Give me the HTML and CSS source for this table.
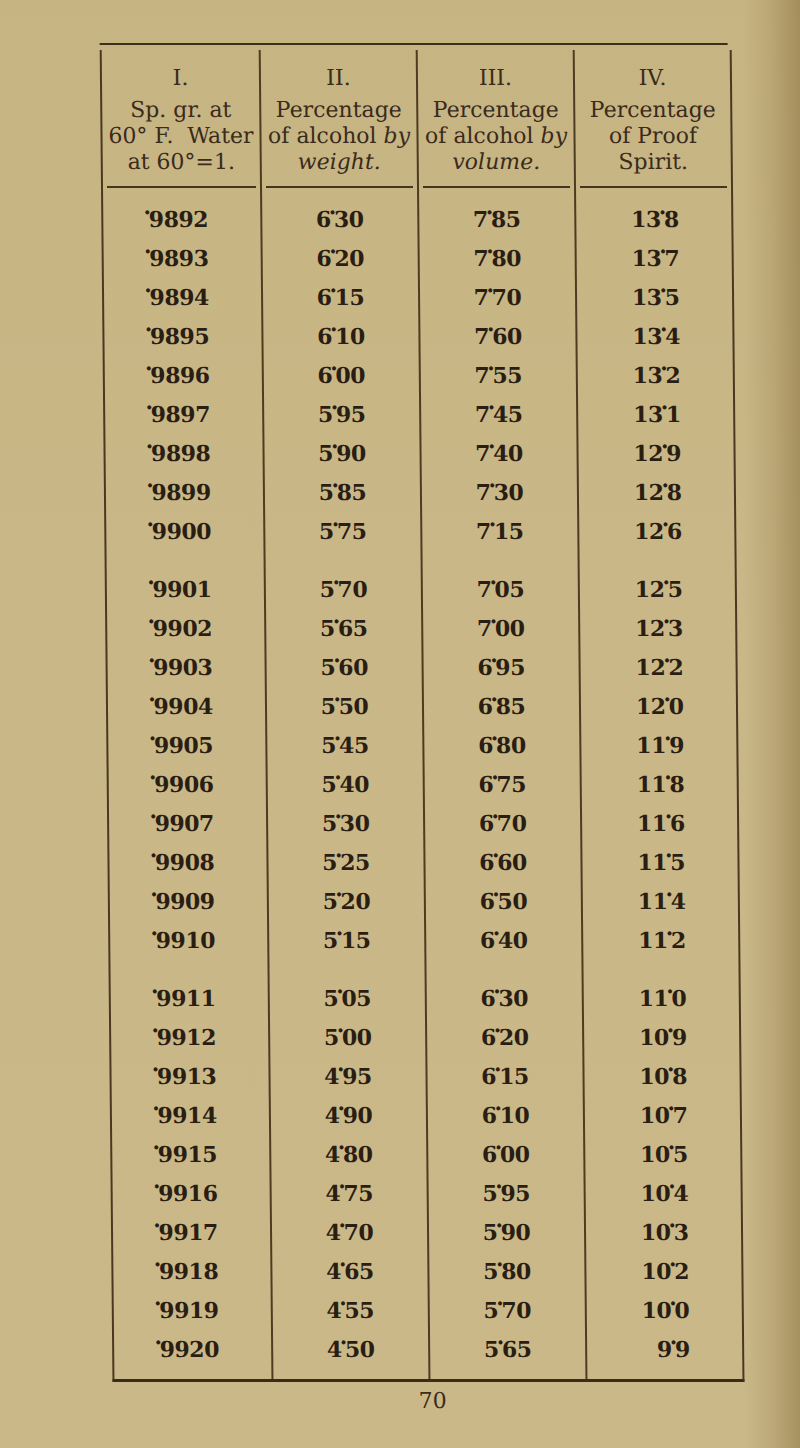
FILE: index.html
```html
<!DOCTYPE html>
<html lang="en">
<head>
<meta charset="utf-8">
<title>Table p. 70</title>
<link rel="stylesheet" href="styles.css">
</head>
<body>
<div class="page">
  <div class="sheet">
    <div class="top-rule"></div>
    <table class="tbl">
      <colgroup><col class="w"><col class="w"><col class="w"><col class="w"></colgroup>
      <thead>
        <tr>
          <th><div class="roman">I.</div><div class="htext">Sp. gr. at<br>60° F.&nbsp; Water<br>at 60°=1.</div><div class="hrule"></div></th>
          <th><div class="roman">II.</div><div class="htext">Percentage<br>of alcohol <i>by</i><br><i>weight.</i></div><div class="hrule"></div></th>
          <th><div class="roman">III.</div><div class="htext">Percentage<br>of alcohol <i>by</i><br><i>volume.</i></div><div class="hrule"></div></th>
          <th><div class="roman">IV.</div><div class="htext">Percentage<br>of Proof<br>Spirit.</div><div class="hrule"></div></th>
        </tr>
      </thead>
      <tbody>
        <tr class="first"><td class="c1"><span class="pt">·</span>9892</td><td>6<span class="pt">·</span>30</td><td>7<span class="pt">·</span>85</td><td><span class="v">13<span class="pt">·</span>8</span></td></tr>
        <tr><td class="c1"><span class="pt">·</span>9893</td><td>6<span class="pt">·</span>20</td><td>7<span class="pt">·</span>80</td><td><span class="v">13<span class="pt">·</span>7</span></td></tr>
        <tr><td class="c1"><span class="pt">·</span>9894</td><td>6<span class="pt">·</span>15</td><td>7<span class="pt">·</span>70</td><td><span class="v">13<span class="pt">·</span>5</span></td></tr>
        <tr><td class="c1"><span class="pt">·</span>9895</td><td>6<span class="pt">·</span>10</td><td>7<span class="pt">·</span>60</td><td><span class="v">13<span class="pt">·</span>4</span></td></tr>
        <tr><td class="c1"><span class="pt">·</span>9896</td><td>6<span class="pt">·</span>00</td><td>7<span class="pt">·</span>55</td><td><span class="v">13<span class="pt">·</span>2</span></td></tr>
        <tr><td class="c1"><span class="pt">·</span>9897</td><td>5<span class="pt">·</span>95</td><td>7<span class="pt">·</span>45</td><td><span class="v">13<span class="pt">·</span>1</span></td></tr>
        <tr><td class="c1"><span class="pt">·</span>9898</td><td>5<span class="pt">·</span>90</td><td>7<span class="pt">·</span>40</td><td><span class="v">12<span class="pt">·</span>9</span></td></tr>
        <tr><td class="c1"><span class="pt">·</span>9899</td><td>5<span class="pt">·</span>85</td><td>7<span class="pt">·</span>30</td><td><span class="v">12<span class="pt">·</span>8</span></td></tr>
        <tr><td class="c1"><span class="pt">·</span>9900</td><td>5<span class="pt">·</span>75</td><td>7<span class="pt">·</span>15</td><td><span class="v">12<span class="pt">·</span>6</span></td></tr>
        <tr class="gap"><td class="c1"><span class="pt">·</span>9901</td><td>5<span class="pt">·</span>70</td><td>7<span class="pt">·</span>05</td><td><span class="v">12<span class="pt">·</span>5</span></td></tr>
        <tr><td class="c1"><span class="pt">·</span>9902</td><td>5<span class="pt">·</span>65</td><td>7<span class="pt">·</span>00</td><td><span class="v">12<span class="pt">·</span>3</span></td></tr>
        <tr><td class="c1"><span class="pt">·</span>9903</td><td>5<span class="pt">·</span>60</td><td>6<span class="pt">·</span>95</td><td><span class="v">12<span class="pt">·</span>2</span></td></tr>
        <tr><td class="c1"><span class="pt">·</span>9904</td><td>5<span class="pt">·</span>50</td><td>6<span class="pt">·</span>85</td><td><span class="v">12<span class="pt">·</span>0</span></td></tr>
        <tr><td class="c1"><span class="pt">·</span>9905</td><td>5<span class="pt">·</span>45</td><td>6<span class="pt">·</span>80</td><td><span class="v">11<span class="pt">·</span>9</span></td></tr>
        <tr><td class="c1"><span class="pt">·</span>9906</td><td>5<span class="pt">·</span>40</td><td>6<span class="pt">·</span>75</td><td><span class="v">11<span class="pt">·</span>8</span></td></tr>
        <tr><td class="c1"><span class="pt">·</span>9907</td><td>5<span class="pt">·</span>30</td><td>6<span class="pt">·</span>70</td><td><span class="v">11<span class="pt">·</span>6</span></td></tr>
        <tr><td class="c1"><span class="pt">·</span>9908</td><td>5<span class="pt">·</span>25</td><td>6<span class="pt">·</span>60</td><td><span class="v">11<span class="pt">·</span>5</span></td></tr>
        <tr><td class="c1"><span class="pt">·</span>9909</td><td>5<span class="pt">·</span>20</td><td>6<span class="pt">·</span>50</td><td><span class="v">11<span class="pt">·</span>4</span></td></tr>
        <tr><td class="c1"><span class="pt">·</span>9910</td><td>5<span class="pt">·</span>15</td><td>6<span class="pt">·</span>40</td><td><span class="v">11<span class="pt">·</span>2</span></td></tr>
        <tr class="gap"><td class="c1"><span class="pt">·</span>9911</td><td>5<span class="pt">·</span>05</td><td>6<span class="pt">·</span>30</td><td><span class="v">11<span class="pt">·</span>0</span></td></tr>
        <tr><td class="c1"><span class="pt">·</span>9912</td><td>5<span class="pt">·</span>00</td><td>6<span class="pt">·</span>20</td><td><span class="v">10<span class="pt">·</span>9</span></td></tr>
        <tr><td class="c1"><span class="pt">·</span>9913</td><td>4<span class="pt">·</span>95</td><td>6<span class="pt">·</span>15</td><td><span class="v">10<span class="pt">·</span>8</span></td></tr>
        <tr><td class="c1"><span class="pt">·</span>9914</td><td>4<span class="pt">·</span>90</td><td>6<span class="pt">·</span>10</td><td><span class="v">10<span class="pt">·</span>7</span></td></tr>
        <tr><td class="c1"><span class="pt">·</span>9915</td><td>4<span class="pt">·</span>80</td><td>6<span class="pt">·</span>00</td><td><span class="v">10<span class="pt">·</span>5</span></td></tr>
        <tr><td class="c1"><span class="pt">·</span>9916</td><td>4<span class="pt">·</span>75</td><td>5<span class="pt">·</span>95</td><td><span class="v">10<span class="pt">·</span>4</span></td></tr>
        <tr><td class="c1"><span class="pt">·</span>9917</td><td>4<span class="pt">·</span>70</td><td>5<span class="pt">·</span>90</td><td><span class="v">10<span class="pt">·</span>3</span></td></tr>
        <tr><td class="c1"><span class="pt">·</span>9918</td><td>4<span class="pt">·</span>65</td><td>5<span class="pt">·</span>80</td><td><span class="v">10<span class="pt">·</span>2</span></td></tr>
        <tr><td class="c1"><span class="pt">·</span>9919</td><td>4<span class="pt">·</span>55</td><td>5<span class="pt">·</span>70</td><td><span class="v">10<span class="pt">·</span>0</span></td></tr>
        <tr class="last"><td class="c1"><span class="pt">·</span>9920</td><td>4<span class="pt">·</span>50</td><td>5<span class="pt">·</span>65</td><td><span class="v">9<span class="pt">·</span>9</span></td></tr>
      </tbody>
    </table>
    <div class="folio">70</div>
  </div>
</div>
</body>
</html>
```
FILE: styles.css
```css
html, body {
  margin: 0;
  padding: 0;
}

.page {
  width: 800px;
  height: 1448px;
  overflow: hidden;
  background:
    linear-gradient(to right,
      rgba(0,0,0,0) 0%,
      rgba(0,0,0,0) 93%,
      rgba(90,60,10,0.12) 96.5%,
      rgba(90,60,10,0.32) 100%),
    linear-gradient(to bottom, #c6b482 0%, #c9b787 40%, #cab888 100%);
  color: #2b1f14;
}

.sheet {
  padding-top: 43px;
  transform: skewX(0.55deg);
  transform-origin: 50% 50%;
}

.top-rule {
  margin-left: 106px;
  width: 628px;
  height: 2px;
  background: #3e2f1d;
}

.tbl {
  margin-top: 5px;
  margin-left: 106px;
  border-collapse: separate;
  border-spacing: 0;
  table-layout: fixed;
  width: 632px;
  border-left: 2px solid #4a3920;
  border-right: 2px solid #4a3920;
  border-bottom: 3px solid #3b2c1a;
}

.tbl col.w {
  width: 157px;
}

.tbl th,
.tbl td {
  padding: 0;
  text-align: center;
}

.tbl th + th,
.tbl td + td {
  border-left: 2px solid #4e3c22;
}

.tbl th {
  vertical-align: top;
  padding-top: 15px;
  font-family: "DejaVu Serif", "Liberation Serif", serif;
  font-weight: normal;
  font-size: 22px;
  line-height: 26px;
  color: #3a2b1b;
}

.roman {
  margin-bottom: 6px;
}

.htext i {
  font-style: italic;
}

.hrule {
  margin: 11px 4px 0;
  height: 2px;
  background: #45351f;
}

.tbl td {
  font-family: "DejaVu Serif", "Liberation Serif", serif;
  font-weight: bold;
  font-size: 22px;
  line-height: 39px;
  letter-spacing: -0.5px;
  color: #2a1e13;
  white-space: nowrap;
}

.tbl tr.first td {
  padding-top: 12px;
}

.tbl tr.gap td {
  padding-top: 19px;
}

.tbl tr.last td {
  padding-bottom: 10px;
}

.tbl td.c1 {
  padding-right: 10px;
}

.pt {
  display: inline-block;
  line-height: 0;
  vertical-align: 0.3em;
  margin: 0 -2px;
}

.v {
  display: inline-block;
  width: 50px;
  text-align: right;
}

.folio {
  margin-left: 106px;
  width: 632px;
  padding-left: 8px;
  box-sizing: border-box;
  margin-top: 6px;
  text-align: center;
  font-family: "DejaVu Serif", "Liberation Serif", serif;
  font-size: 22px;
  line-height: 26px;
  color: #3a2b1b;
}
```
